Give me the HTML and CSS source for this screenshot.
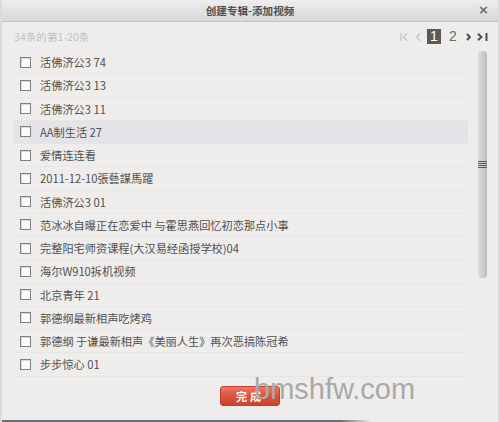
FILE: index.html
```html
<!DOCTYPE html>
<html lang="zh-CN">
<head>
<meta charset="utf-8">
<title>创建专辑-添加视频</title>
<link rel="stylesheet" href="styles.css">
</head>
<body>
<div class="dialog">
  <header class="titlebar">
    <span class="title">创建专辑-添加视频</span>
    <span class="close">×</span>
  </header>

  <div class="toolbar">
    <span class="count">34条的第1-20条</span>
    <nav class="pager">
      <svg class="pg-first" width="8" height="10" viewBox="0 0 8 10"><path d="M1 1v8M7 1.2L3.4 5 7 8.8" fill="none" stroke="#c9c9c9" stroke-width="1.6"/></svg>
      <svg class="pg-prev" width="6" height="10" viewBox="0 0 6 10"><path d="M5 1.2L1.6 5 5 8.8" fill="none" stroke="#c9c9c9" stroke-width="1.6"/></svg>
      <span class="pg-current">1</span>
      <span class="pg-num">2</span>
      <svg class="pg-next" width="5" height="10" viewBox="0 0 5 10"><path d="M1 1.8L3.8 5 1 8.2" fill="none" stroke="#4e4e4e" stroke-width="2"/></svg>
      <svg class="pg-last" width="11" height="10" viewBox="0 0 11 10"><path d="M1 1.8L4.4 5 1 8.2" fill="none" stroke="#4e4e4e" stroke-width="2"/><path d="M9.5 1v8" stroke="#4e4e4e" stroke-width="2"/></svg>
    </nav>
  </div>

  <div class="list-area">
    <ul class="video-list">
      <li class="row"><span class="check"></span><span class="name">活佛济公3 74</span></li>
      <li class="row"><span class="check"></span><span class="name">活佛济公3 13</span></li>
      <li class="row"><span class="check"></span><span class="name">活佛济公3 11</span></li>
      <li class="row is-hover"><span class="check"></span><span class="name">AA制生活 27</span></li>
      <li class="row"><span class="check"></span><span class="name">爱情连连看</span></li>
      <li class="row"><span class="check"></span><span class="name">2011-12-10張藝謀馬躍</span></li>
      <li class="row"><span class="check"></span><span class="name">活佛济公3 01</span></li>
      <li class="row"><span class="check"></span><span class="name">范冰冰自曝正在恋爱中 与霍思燕回忆初恋那点小事</span></li>
      <li class="row"><span class="check"></span><span class="name">完整阳宅师资课程(大汉易经函授学校)04</span></li>
      <li class="row"><span class="check"></span><span class="name">海尔W910拆机视频</span></li>
      <li class="row"><span class="check"></span><span class="name">北京青年 21</span></li>
      <li class="row"><span class="check"></span><span class="name">郭德纲最新相声吃烤鸡</span></li>
      <li class="row"><span class="check"></span><span class="name">郭德纲 于谦最新相声《美丽人生》再次恶搞陈冠希</span></li>
      <li class="row"><span class="check"></span><span class="name">步步惊心 01</span></li>
    </ul>
    <div class="scrollbar">
      <div class="thumb"><span class="grip"></span></div>
    </div>
  </div>

  <footer class="footer">
    <button class="btn-done" type="button">完成</button>
  </footer>
  <div class="edge"></div>

  <span class="watermark">bmshfw.com</span>
</div>
</body>
</html>
```

FILE: styles.css
```css
html, body {
  margin: 0;
  padding: 0;
  background: #efedec;
}

body {
  font-family: "Noto Sans CJK SC", "Noto Sans", sans-serif;
}

.dialog {
  position: relative;
  width: 500px;
  height: 422px;
  box-sizing: border-box;
  display: flex;
  flex-direction: column;
  background: #efedec;
  border-left: 2px solid #dcdad9;
  border-right: 2px solid #dcdad9;
  overflow: hidden;
}

/* title bar */
.titlebar {
  height: 21px;
  border-bottom: 1px solid #c4c4c4;
  background: linear-gradient(#eeeeee, #d8d8d8);
  display: flex;
  align-items: center;
  justify-content: center;
  position: relative;
}

.title {
  font-size: 10.6px;
  font-weight: 700;
  color: #505050;
}

.close {
  position: absolute;
  right: 9px;
  top: 2px;
  font-family: "DejaVu Sans", sans-serif;
  font-size: 13px;
  font-weight: 700;
  color: #6a6a6a;
}

/* count + pager */
.toolbar {
  height: 29px;
  display: flex;
  align-items: center;
  justify-content: space-between;
  padding: 0 10px 0 12px;
}

.count {
  font-size: 10.6px;
  color: #c3c1c0;
}

.pager {
  display: flex;
  align-items: center;
}

.pager svg { display: block; }

.pg-prev { margin-left: 7px; }

.pg-current {
  margin-left: 6px;
  width: 14px;
  height: 15px;
  background: #5a5a5a;
  color: #fff;
  font-family: "Liberation Sans", sans-serif;
  font-size: 14px;
  line-height: 15px;
  text-align: center;
}

.pg-num {
  margin-left: 8px;
  width: 8px;
  font-family: "Liberation Sans", sans-serif;
  font-size: 14px;
  line-height: 15px;
  color: #6c6c6c;
}

.pg-next { margin-left: 9px; }
.pg-last { margin-left: 6px; }

/* list */
.list-area {
  display: flex;
  padding-left: 12px;
}

.video-list {
  list-style: none;
  margin: 0;
  padding: 0;
  width: 454px;
}

.row {
  height: 23.25px;
  box-sizing: border-box;
  border-bottom: 1px solid #e7e5e4;
  display: flex;
  align-items: center;
  padding-left: 6px;
  font-size: 11.2px;
  color: #505050;
}

.row.is-hover {
  background: #e4e3e8;
}

.check {
  width: 11px;
  height: 11px;
  box-sizing: border-box;
  border: 1px solid #808080;
  background: #fbfbfb;
  box-shadow: inset 1px 1px 0 #dadada;
  margin-right: 9px;
  flex: none;
}

.name {
  white-space: nowrap;
}

.scrollbar {
  width: 9px;
  margin-left: 10px;
}

.thumb {
  height: 227px;
  border-radius: 4px;
  background: linear-gradient(to right, #dcdcdc, #cfcfcf 50%, #b9b9b9);
  display: flex;
  align-items: center;
  justify-content: center;
}

.grip {
  width: 9px;
  height: 7px;
  background: repeating-linear-gradient(#5a5a5a 0 1px, transparent 1px 2px);
}

/* footer */
.footer {
  display: flex;
  justify-content: center;
  padding-top: 9px;
}

.btn-done {
  width: 60px;
  height: 20px;
  padding: 0;
  border: 1px solid #bf402c;
  border-radius: 3px;
  background: linear-gradient(#ee7a64, #dc5540 45%, #cc4330);
  color: #fff;
  font-family: "Noto Sans CJK SC", sans-serif;
  font-size: 11px;
  font-weight: 700;
  line-height: 18px;
  letter-spacing: 3px;
}

.edge {
  margin-top: auto;
  height: 2px;
  margin-left: -2px;
  background: linear-gradient(to right, #6c7073 0, #6c7073 340px, rgba(108,112,115,0) 372px);
}

.watermark {
  position: absolute;
  left: 252px;
  top: 375px;
  font-family: "Liberation Sans", sans-serif;
  font-size: 29px;
  line-height: 29px;
  color: #a9a9a9;
}
```
